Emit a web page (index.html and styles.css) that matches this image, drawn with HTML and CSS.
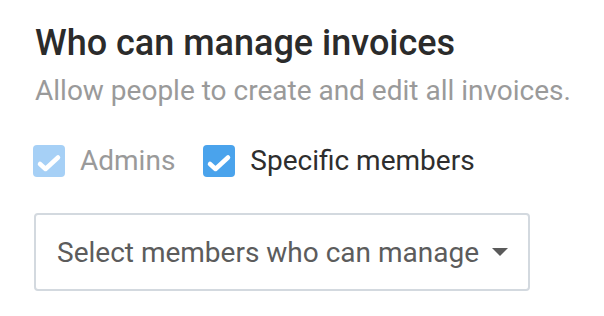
FILE: index.html
```html
<!DOCTYPE html>
<html lang="en">

<head>
    <meta charset="UTF-8">
    <meta name="viewport" content="width=device-width, initial-scale=1.0">
    <title>Invoice permissions</title>
    <link rel="stylesheet" href="styles.css">
</head>

<body>
    <div class="section">
        <h2 class="title">Who can manage invoices</h2>
        <p class="subtitle">Allow people to create and edit all invoices.</p>

        <div class="options">
            <label class="option option-disabled">
                <span class="box">
                    <svg viewBox="0 0 32 32" width="32" height="32"><polyline points="7,19 12.5,24 25,12.5" /></svg>
                </span>
                Admins
            </label>
            <label class="option">
                <span class="box">
                    <svg viewBox="0 0 32 32" width="32" height="32"><polyline points="7,19 12.5,24 25,12.5" /></svg>
                </span>
                Specific members
            </label>
        </div>

        <div class="select">
            <span class="select-text">Select members who can manage</span>
            <span class="caret"></span>
        </div>
    </div>
</body>

</html>
```

FILE: styles.css
```css
body {
    font-family: Roboto, "Noto Sans", sans-serif;
    background: #fff;
    margin: 0;
    padding: 0;
}

.section {
    padding: 22px 0 0 35px;
}

.title {
    margin: 0;
    font-size: 36px;
    line-height: 42px;
    font-weight: 500;
    color: #2b2b2b;
}

.subtitle {
    margin: 10px 0 0;
    font-size: 28px;
    line-height: 34px;
    color: #9a9a9a;
}

.options {
    display: flex;
    gap: 28px;
    margin-top: 37px;
    margin-left: -2px;
}

.option {
    display: flex;
    align-items: center;
    gap: 15px;
    font-size: 28px;
    line-height: 32px;
    color: #2e2e2e;
}

.option-disabled {
    color: #9a9a9a;
}

.box {
    width: 32px;
    height: 32px;
    border-radius: 4px;
    background-color: #4aa3ec;
}

.option-disabled .box {
    background-color: #a6d0f6;
}

.box svg {
    display: block;
    fill: none;
    stroke: #fff;
    stroke-width: 4.5;
    stroke-linecap: round;
    stroke-linejoin: round;
}

.select {
    display: flex;
    align-items: center;
    justify-content: space-between;
    box-sizing: border-box;
    width: 496px;
    height: 78px;
    margin: 36px 0 0 -1px;
    padding: 0 20px 0 21px;
    border: 2px solid #d3d9df;
    border-radius: 4px;
    font-size: 28px;
    color: #5c5c5c;
}

.caret {
    width: 0;
    height: 0;
    border-left: 8px solid transparent;
    border-right: 8px solid transparent;
    border-top: 8px solid #5a5a5a;
}
```
